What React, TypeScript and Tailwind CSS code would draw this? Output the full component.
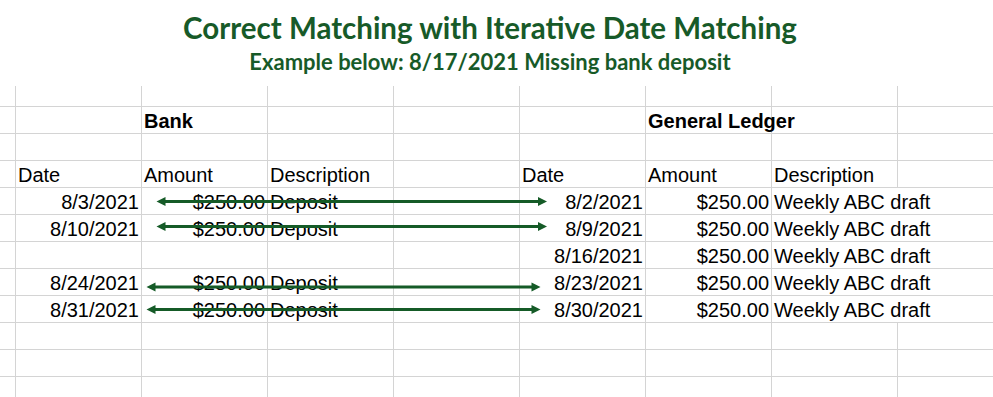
import React from "react";

type Cell = { t?: string; r?: boolean; b?: boolean; noR?: boolean };

const EMPTY: Cell[] = Array.from({ length: 8 }, () => ({}));

const dataRow = (
  bd: string,
  ba: string,
  bdesc: string,
  gd: string,
  ga: string,
  gdesc: string
): Cell[] => [
  { t: bd, r: true },
  { t: ba, r: true },
  { t: bdesc },
  {},
  { t: gd, r: true },
  { t: ga, r: true },
  { t: gdesc, noR: true },
  {},
];

const rows: { h: number; cells: Cell[] }[] = [
  { h: 21, cells: EMPTY },
  {
    h: 27,
    cells: [{}, { t: "Bank", b: true }, {}, {}, {}, { t: "General Ledger", b: true }, {}, {}],
  },
  { h: 27, cells: EMPTY },
  {
    h: 27,
    cells: [
      { t: "Date" },
      { t: "Amount" },
      { t: "Description" },
      {},
      { t: "Date" },
      { t: "Amount" },
      { t: "Description" },
      {},
    ],
  },
  { h: 27, cells: dataRow("8/3/2021", "$250.00", "Deposit", "8/2/2021", "$250.00", "Weekly ABC draft") },
  { h: 27, cells: dataRow("8/10/2021", "$250.00", "Deposit", "8/9/2021", "$250.00", "Weekly ABC draft") },
  { h: 27, cells: dataRow("", "", "", "8/16/2021", "$250.00", "Weekly ABC draft") },
  { h: 27, cells: dataRow("8/24/2021", "$250.00", "Deposit", "8/23/2021", "$250.00", "Weekly ABC draft") },
  { h: 27, cells: dataRow("8/31/2021", "$250.00", "Deposit", "8/30/2021", "$250.00", "Weekly ABC draft") },
  { h: 27, cells: EMPTY },
  { h: 27, cells: EMPTY },
  { h: 27, cells: EMPTY },
];

function Arrow({ y, x1, x2 }: { y: number; x1: number; x2: number }) {
  const c = "#155b27";
  return (
    <g>
      <line x1={x1 + 6} y1={y} x2={x2 - 6} y2={y} stroke={c} strokeWidth={3} />
      <polygon points={`${x1},${y} ${x1 + 9},${y - 4.5} ${x1 + 9},${y + 4.5}`} fill={c} />
      <polygon points={`${x2},${y} ${x2 - 9},${y - 4.5} ${x2 - 9},${y + 4.5}`} fill={c} />
    </g>
  );
}

export default function App() {
  return (
    <div
      className="relative w-[993px] h-[397px] overflow-hidden bg-white"
      style={{ fontFamily: '"Liberation Sans", Arial, sans-serif' }}
    >
      <div
        className="h-[86px] w-[980px] flex flex-col items-center text-[#175a28]"
        style={{ fontFamily: 'Lato, "Open Sans", sans-serif' }}
      >
        <div className="mt-[11px] text-[29.5px] font-bold leading-[34px]">
          Correct Matching with Iterative Date Matching
        </div>
        <div className="mt-[4px] text-[22px] font-bold leading-[26px]">
          Example below: 8/17/2021 Missing bank deposit
        </div>
      </div>
      <div className="flex flex-col">
        {rows.map((row, i) => (
          <div key={i} className="flex" style={{ height: row.h }}>
            <div className="w-[16px] shrink-0 border-r border-b border-[#d4d4d4]" />
            {row.cells.map((c, j) => (
              <div
                key={j}
                className={
                  "w-[126px] shrink-0 flex items-end border-b border-[#d4d4d4] px-[2px] whitespace-nowrap text-[20px] leading-[23px] text-black overflow-visible " +
                  (c.noR ? "" : "border-r ") +
                  (c.r ? "justify-end " : "justify-start ") +
                  (c.b ? "font-bold" : "")
                }
              >
                {c.t ? <span>{c.t}</span> : null}
              </div>
            ))}
          </div>
        ))}
      </div>
      <svg className="absolute left-0 top-0 pointer-events-none" width={993} height={397}>
        <Arrow y={201.5} x1={156.5} x2={547} />
        <Arrow y={226.5} x1={156.5} x2={547} />
        <Arrow y={287} x1={146.5} x2={540.5} />
        <Arrow y={309.5} x1={146.5} x2={540.5} />
      </svg>
    </div>
  );
}
